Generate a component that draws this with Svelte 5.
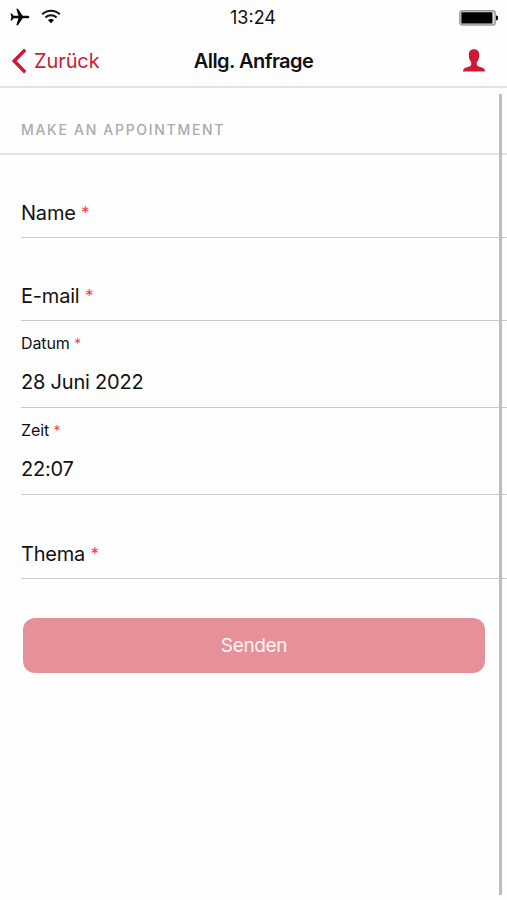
<script>
	let fields = [
		{ id: 'name', label: 'Name', value: '' },
		{ id: 'email', label: 'E-mail', value: '' },
		{ id: 'date', label: 'Datum', value: '28 Juni 2022' },
		{ id: 'time', label: 'Zeit', value: '22:07' },
		{ id: 'topic', label: 'Thema', value: '' }
	];
</script>

<div class="screen">
	<div class="status">
		<div class="signals">
			<svg class="plane" width="20" height="18" viewBox="0 0 20 18">
				<path d="M19.3 9c0-.8-.9-1.3-2-1.3h-4.6L7.9.7H6.3l2.2 7H3.6L1.8 5.4H.5L1.5 9 .5 12.6h1.300l1.800-2.300h4.900l-2.200 7h1.600l4.800-7h4.600c1.100 0 2-.5 2-1.300z"/>
			</svg>
			<svg class="wifi" width="20" height="15" viewBox="0 0 20 15">
				<path class="arc" d="M1.2 5.3C6.3.6 13.7.6 18.8 5.3"/>
				<path class="arc" d="M4.4 8.5c3.2-2.9 8-2.9 11.2 0"/>
				<path d="M6.9 11.1c1.8-1.6 4.4-1.6 6.2 0L10 14.2z"/>
			</svg>
		</div>
		<span class="clock">13:24</span>
		<svg class="battery" width="40" height="16" viewBox="0 0 40 16">
			<rect x=".8" y=".8" width="35.4" height="14.2" rx="2.2" fill="#ddd" stroke="#999" stroke-width="1.4"/>
			<rect x="2.4" y="2.2" width="31" height="11.4" rx=".6"/>
			<path d="M37 5.2c2.9.6 2.9 4.8 0 5.4z"/>
		</svg>
	</div>

	<header>
		<button class="back">
			<svg width="15" height="26" viewBox="0 0 15 26">
				<path d="M13.2 1.8 2.2 13l11 11.2"/>
			</svg>
			<span>Zurück</span>
		</button>
		<h1>Allg. Anfrage</h1>
		<button class="profile" aria-label="Profil">
			<svg width="22" height="23" viewBox="0 0 22 23">
				<path d="M11 .3c3.4 0 5.3 2.1 5.2 5.4 0 3.1-.7 5.6-2.3 7.4-.4 1.8-.2 3.1.8 3.9 1.3.9 3.7 1.2 5.4 2 1.1.5 1.8 1.6 1.9 3.4H0c.1-1.8.8-2.9 1.9-3.4 1.7-.8 4.1-1.1 5.4-2 1-.8 1.2-2.1.8-3.9C6.500 11.300 5.800 8.800 5.800 5.700 5.700 2.400 7.600.3 11 .3z"/>
			</svg>
		</button>
	</header>

	<main>
		<h2>MAKE AN APPOINTMENT</h2>
		<form>
			{#each fields as field (field.id)}
				<div class="field {field.id}" class:filled={field.value}>
					<div class="label">{field.label} <span class="required">*</span></div>
					{#if field.value}
						<div class="value">{field.value}</div>
					{/if}
				</div>
			{/each}
			<button class="send" type="button">Senden</button>
		</form>
		<div class="scrollbar"></div>
	</main>
</div>

<style>
	:global(body) {
		background: #fefefe;
	}

	.screen {
		display: flex;
		flex-direction: column;
		height: 900px;
		overflow: hidden;
		font-family: Inter, "Liberation Sans", sans-serif;
		color: #111;
	}

	button {
		border: none;
		padding: 0;
		background: none;
		font-family: inherit;
		color: #cc1a35;
	}

	svg {
		display: block;
	}

	.status {
		display: grid;
		grid-template-columns: 1fr auto 1fr;
		align-items: center;
		height: 35px;
		padding: 0 8px 0 10px;
		box-sizing: border-box;
	}

	.signals {
		display: flex;
		align-items: center;
		gap: 11px;
	}

	.plane {
		margin-top: -1px;
	}

	.wifi {
		margin-top: -2px;
	}

	.arc {
		fill: none;
		stroke: #111;
		stroke-width: 2;
	}

	.clock {
		margin-right: 3px;
		font-size: 18px;
	}

	.battery {
		justify-self: end;
	}

	header {
		display: grid;
		grid-template-columns: 1fr auto 1fr;
		align-items: center;
		height: 53px;
		padding: 0 22px 0 12px;
		box-sizing: border-box;
		border-bottom: 2px solid #e2e2e2;
	}

	.back {
		display: flex;
		align-items: center;
		gap: 7px;
		font-size: 20px;
		letter-spacing: -0.1px;
	}

	.back path {
		fill: none;
		stroke: #cc1a35;
		stroke-width: 3.4;
	}

	.profile {
		justify-self: end;
		fill: #cc1a35;
	}

	h1 {
		margin: 0 0 0 10px;
		font-size: 20px;
		font-weight: 600;
		letter-spacing: -0.55px;
	}

	main {
		position: relative;
		flex: 1;
	}

	h2 {
		height: 67px;
		margin: 0;
		padding: 19px 0 0 21px;
		box-sizing: border-box;
		border-bottom: 2px solid #e2e2e2;
		font-size: 14px;
		line-height: 46px;
		font-weight: 500;
		letter-spacing: 1.7px;
		color: #aaa;
	}

	.field {
		display: flex;
		flex-direction: column;
		justify-content: flex-end;
		height: 83px;
		margin-left: 21px;
		padding-bottom: 9px;
		box-sizing: border-box;
		border-bottom: 1px solid #c9c9c9;
		font-size: 20px;
		line-height: 30px;
		letter-spacing: -0.2px;
	}

	.filled {
		height: 87px;
		padding-bottom: 10px;
	}

	.topic {
		height: 84px;
	}

	.filled .label {
		margin-bottom: 12px;
		font-size: 16px;
		line-height: 24px;
		letter-spacing: -0.1px;
	}

	.required {
		font-size: 0.86em;
		line-height: 1;
		vertical-align: 1px;
		color: #f5424f;
	}

	.send {
		display: block;
		width: 462px;
		height: 55px;
		margin: 39px 0 0 23px;
		border-radius: 12px;
		background: #e6919a;
		font-size: 19px;
		letter-spacing: -0.35px;
		color: #fff5f3;
	}

	/* overlay scroll indicator */
	.scrollbar {
		position: absolute;
		top: 6px;
		right: 5px;
		bottom: 5px;
		width: 3px;
		background: #bdbdbd;
	}
</style>
